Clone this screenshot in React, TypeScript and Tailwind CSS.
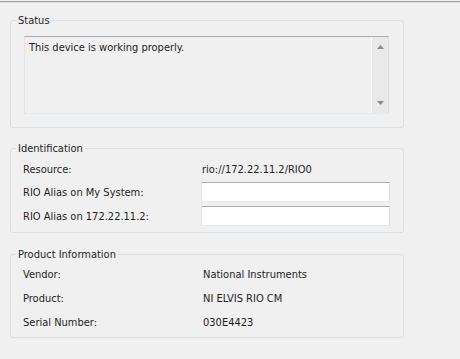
const font = "font-['Tahoma','DejaVu_Sans_Condensed','DejaVu_Sans',sans-serif]";

function Group({
  title,
  className,
  children,
}: {
  title: string;
  className?: string;
  children: React.ReactNode;
}) {
  return (
    <fieldset
      className={`w-[394px] rounded-[3px] border border-[#d5dfe5] px-[5px] ${className ?? ""}`}
    >
      <legend className="px-[2px] text-[11px] leading-[13px] text-[#1e1e1e]">{title}</legend>
      {children}
    </fieldset>
  );
}

function Row({ label, children, className }: { label: string; children: React.ReactNode; className?: string }) {
  return (
    <div className={`flex items-center ${className ?? ""}`}>
      <span className="w-[185px] pl-[7px]">{label}</span>
      {children}
    </div>
  );
}

function TextBox() {
  return (
    <div className="h-[20px] w-[189px] border border-[#dbdfe6] border-t-[#abadb3] border-l-[#e2e3ea] border-b-[#e3e9ef] bg-white" />
  );
}

export default function App() {
  return (
    <div className={`h-[359px] w-[460px] overflow-hidden bg-[#f0f0f0] text-[11px] leading-[13px] text-[#1e1e1e] ${font}`}>
      <div className="mt-px h-[2px] border-t border-[#a0a0a0] bg-[#dcdcdc]" />
      <div className="flex flex-col px-[10px]">
        <Group title="Status" className="mt-[11px] pb-[13px]">
          <div className="ml-[8px] mt-[9px] flex h-[78px] w-[365px] border border-[#dbdfe6] border-t-[#abadb3] border-l-[#e2e3ea] border-b-[#e3e9ef]">
            <div className="flex-1 px-[4px] pt-[4px]">This device is working properly.</div>
            <div className="flex w-[17px] flex-col items-center justify-between border-l border-white bg-[#e9e9e9] py-[8px]">
              <svg width="7" height="4" viewBox="0 0 7 4">
                <path d="M3.5 0 L7 4 L0 4 Z" fill="#8a8a8a" />
              </svg>
              <svg width="7" height="4" viewBox="0 0 7 4">
                <path d="M0 0 L7 0 L3.5 4 Z" fill="#8a8a8a" />
              </svg>
            </div>
          </div>
        </Group>

        <Group title="Identification" className="mt-[14px] pb-[6px]">
          <Row label="Resource:" className="mt-[4px] h-[20px]">
            <span className="pl-[1px]">rio://172.22.11.2/RIO0</span>
          </Row>
          <Row label="RIO Alias on My System:" className="mt-[3px]">
            <TextBox />
          </Row>
          <Row label="RIO Alias on 172.22.11.2:" className="mt-[4px]">
            <TextBox />
          </Row>
        </Group>

        <Group title="Product Information" className="mt-[15px] pb-[3px]">
          <Row label="Vendor:" className="mt-[1px] h-[24px]">
            <span className="pl-[2px]">National Instruments</span>
          </Row>
          <Row label="Product:" className="h-[24px]">
            <span className="pl-[2px]">NI ELVIS RIO CM</span>
          </Row>
          <Row label="Serial Number:" className="h-[24px]">
            <span className="pl-[2px]">030E4423</span>
          </Row>
        </Group>
      </div>
    </div>
  );
}
